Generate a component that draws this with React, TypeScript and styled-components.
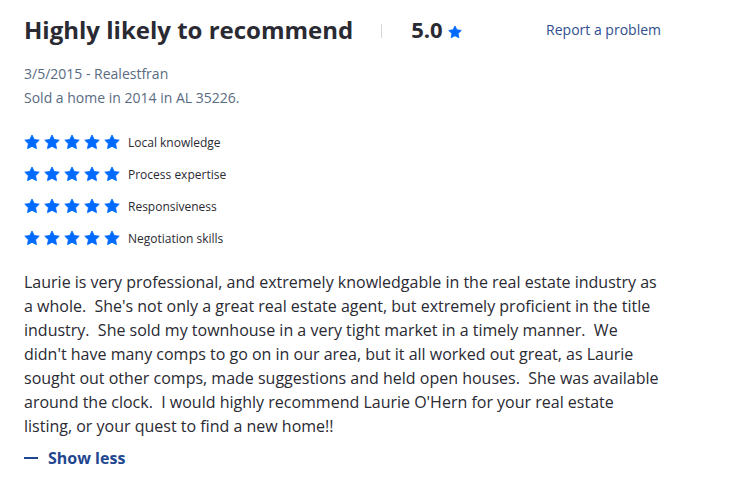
import React from "react";
import styled, { createGlobalStyle } from "styled-components";

const Global = createGlobalStyle`
  html, body { margin: 0; padding: 0; background: #fff; }
  body { font-family: "Open Sans", "Liberation Sans", sans-serif; color: #2a2a33; }
`;

const Card = styled.div`
  width: 640px;
  padding: 13px 24px 0 24px;
`;

const Header = styled.div`
  display: flex;
  align-items: center;
  height: 34px;
`;

const Title = styled.h2`
  margin: 0;
  font-size: 24px;
  font-weight: 700;
  color: #2a2a33;
  line-height: 32px;
`;

const Divider = styled.span`
  width: 1px;
  height: 14px;
  background: #d6d6d6;
  margin: 2px 29px 0 28px;
`;

const Score = styled.span`
  font-size: 22px;
  font-weight: 700;
  color: #2a2a33;
  display: flex;
  align-items: center;
  margin-bottom: 2px;
`;

const ScoreStar = styled.span`
  display: inline-flex;
  margin-left: 5px;
  margin-top: 6px;
`;

const Report = styled.a`
  margin-left: auto;
  font-size: 14px;
  color: #2f4f8f;
  text-decoration: none;
  margin-right: 3px;
  margin-bottom: 2px;
`;

const Meta = styled.div`
  margin-top: 15px;
  font-size: 14px;
  line-height: 24px;
  color: #596b82;
`;

const Ratings = styled.div`
  margin-top: 24px;
  display: flex;
  flex-direction: column;
  gap: 16px;
`;

const RatingRow = styled.div`
  display: flex;
  align-items: center;
  height: 16px;
`;

const Stars = styled.div`
  display: flex;
  gap: 4px;
  margin-right: 8px;
`;

const RatingLabel = styled.span`
  font-size: 12px;
  color: #2a2a33;
`;

const Body = styled.p`
  margin: 24px 0 0 0;
  font-size: 16px;
  line-height: 24px;
  color: #2a2a33;
  white-space: pre-wrap;
`;

const Toggle = styled.button`
  margin-top: 9px;
  padding: 0;
  border: 0;
  background: none;
  display: flex;
  align-items: center;
  gap: 10px;
  font-family: "Open Sans", "Liberation Sans", sans-serif;
  font-size: 16px;
  font-weight: 700;
  color: #1f4690;
  cursor: pointer;
`;

const Minus = styled.span`
  width: 14px;
  height: 2px;
  background: #1f4690;
`;

const Star = ({ size }: { size: number }) => (
  <svg width={size} height={size} viewBox="0 0 24 24" aria-hidden>
    <path
      fill="#006aff"
      stroke="#006aff"
      strokeWidth={1.4}
      strokeLinejoin="round"
      d="M12 1.6 15.3 8.3 22.8 9.3 17.3 14.5 18.7 21.9 12 18.4 5.3 21.9 6.7 14.5 1.2 9.3 8.7 8.3z"
    />
  </svg>
);

const ratings = ["Local knowledge", "Process expertise", "Responsiveness", "Negotiation skills"];

const text =
  "Laurie is very professional, and extremely knowledgable in the real estate industry as a whole.  She's not only a great real estate agent, but extremely proficient in the title industry.  She sold my townhouse in a very tight market in a timely manner.  We didn't have many comps to go on in our area, but it all worked out great, as Laurie sought out other comps, made suggestions and held open houses.  She was available around the clock.  I would highly recommend Laurie O'Hern for your real estate listing, or your quest to find a new home!!";

export default function App() {
  return (
    <>
      <Global />
      <Card>
        <Header>
          <Title>Highly likely to recommend</Title>
          <Divider />
          <Score>
            5.0
            <ScoreStar>
              <Star size={14} />
            </ScoreStar>
          </Score>
          <Report href="#">Report a problem</Report>
        </Header>
        <Meta>
          <div>3/5/2015 - Realestfran</div>
          <div>Sold a home in 2014 in AL 35226.</div>
        </Meta>
        <Ratings>
          {ratings.map((r) => (
            <RatingRow key={r}>
              <Stars>
                {[0, 1, 2, 3, 4].map((i) => (
                  <Star key={i} size={16} />
                ))}
              </Stars>
              <RatingLabel>{r}</RatingLabel>
            </RatingRow>
          ))}
        </Ratings>
        <Body>{text}</Body>
        <Toggle>
          <Minus />
          Show less
        </Toggle>
      </Card>
    </>
  );
}
